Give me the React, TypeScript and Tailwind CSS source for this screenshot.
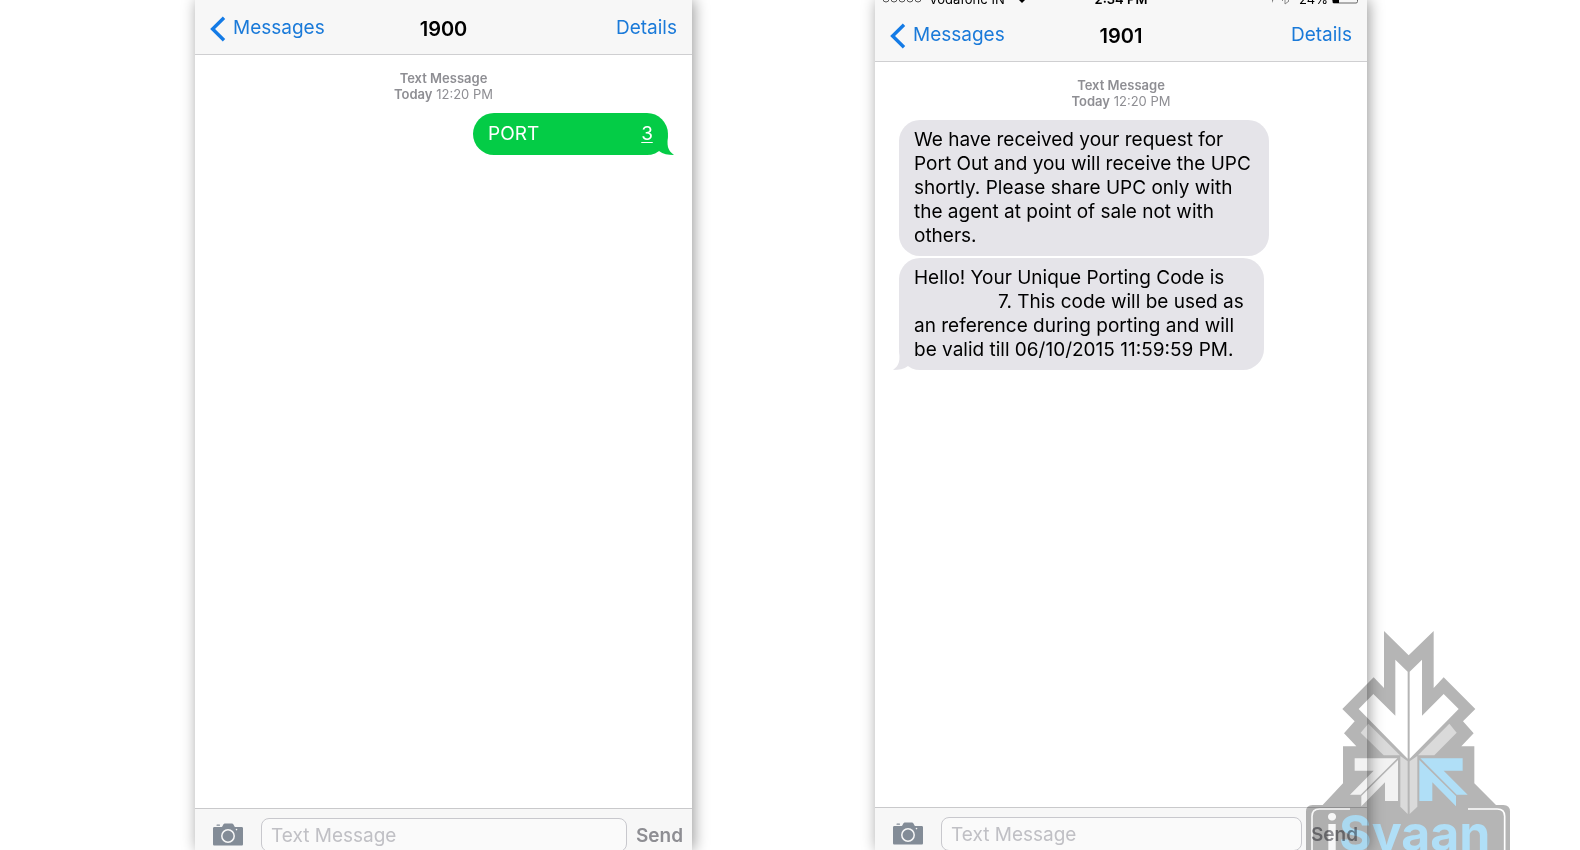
import type { ReactNode } from "react";

// Two SMS conversations side by side, with the site logo stamped over the corner.

function BackChevron() {
  return (
    <svg width="16" height="26" viewBox="0 0 16 26" fill="none" aria-hidden="true">
      <path d="M14 1.8 2.6 13 14 24.2" stroke="#147be6" strokeWidth="3.4" />
    </svg>
  );
}

function CameraIcon() {
  return (
    <svg width="30" height="24" viewBox="0 0 30 24" aria-hidden="true">
      <path
        d="M1.500 4h6.500c1 0 1.300-.6 1.800-1.600C10.500 1 11 .4 12.400.4h6c1.400 0 1.900.6 2.600 2 .5 1 .8 1.600 1.800 1.600h5.700c1 0 1.500.5 1.500 1.500v15.600c0 1-.5 1.500-1.500 1.500h-27C.5 22.600 0 22.100 0 21.100V5.500C0 4.500.5 4 1.500 4Z"
        fill="#838c97"
      />
      <rect x="3.500" y="1.600" width="3.500" height="1.200" rx=".5" fill="#838c97" />
      <circle cx="15" cy="13" r="6.200" fill="none" stroke="#f7f7f7" strokeWidth="1.500" />
      <circle cx="23.500" cy="6.600" r=".8" fill="#f7f7f7" />
    </svg>
  );
}

function StatusBar() {
  return (
    <div className="grid h-[7px] grid-cols-[1fr_auto_1fr] content-end overflow-hidden px-2 text-[13px] leading-4 text-black">
      <div className="flex items-end gap-1.5">
        <svg width="40" height="16" viewBox="0 0 40 16" aria-hidden="true">
          {[3, 11, 19, 27, 35].map((cx) => (
            <circle key={cx} cx={cx} cy="8" r="3" fill="none" stroke="#555" />
          ))}
        </svg>
        <span>Vodafone IN</span>
        <svg className="ml-1" width="14" height="16" viewBox="0 0 14 16" aria-hidden="true">
          <path d="M0 5Q7-1 14 5L7 12Z" />
        </svg>
      </div>
      <span className="font-semibold">2:34 PM</span>
      <div className="flex items-end justify-end gap-1">
        <svg width="10" height="16" viewBox="0 0 10 16" aria-hidden="true">
          <path d="M10 1 5 12V6H0Z" fill="#777" />
        </svg>
        <svg className="mr-1" width="10" height="16" viewBox="0 0 10 16" fill="none" aria-hidden="true">
          <path d="m1 3 7 7-4 3V-1l4 4-7 7" stroke="#888" />
        </svg>
        <span>24%</span>
        <svg width="27" height="16" viewBox="0 0 27 16" aria-hidden="true">
          <rect x=".5" y="1.500" width="25" height="10.500" rx="1.500" fill="none" stroke="#666" />
          <path d="M1 2h6v10H1Z" />
        </svg>
      </div>
    </div>
  );
}

interface PhoneProps {
  title: string;
  showStatus?: boolean;
  footerClass: string;
  children: ReactNode;
}

function Phone({ title, showStatus, footerClass, children }: PhoneProps) {
  const inputId = `message-${title}`;
  return (
    <section className="flex h-full min-w-0 flex-col bg-white shadow-[2px_0_14px_rgba(0,0,0,0.4)]">
      <header className="border-b border-[#cfcfd1] bg-[#f7f7f7]">
        {showStatus && <StatusBar />}
        <div className="grid h-[54px] grid-cols-[1fr_auto_1fr] items-center px-[15px] pt-[3px] text-[19px]">
          <a href="#messages" className="flex items-center gap-[7px] text-[#1a7ad9]">
            <BackChevron />
            Messages
          </a>
          <h1 className="text-[20px] font-semibold text-black">{title}</h1>
          <button type="button" className="justify-self-end text-[#1a7ad9]">
            Details
          </button>
        </div>
      </header>

      <main className="flex min-h-0 flex-1 flex-col px-6 pt-[15px]">
        <p className="mb-[11px] text-center text-[13px] leading-4 text-[#8e8e93]">
          <span className="font-semibold">Text Message</span>
          <br />
          <span className="font-semibold">Today</span> 12:20 PM
        </p>
        {children}
      </main>

      <footer
        className={`flex shrink-0 items-start overflow-hidden border-t border-[#c9c9cb] bg-[#f7f7f7] pr-[9px] pl-[18px] pt-[9px] ${footerClass}`}
      >
        <button type="button" aria-label="Camera" className="mt-[5px] shrink-0">
          <CameraIcon />
        </button>
        <label htmlFor={inputId} className="sr-only">
          Text Message
        </label>
        <input
          id={inputId}
          type="text"
          placeholder="Text Message"
          className="ml-[18px] h-[34px] min-w-0 flex-1 rounded-lg border border-[#c8c8cd] bg-[#fafafa] px-[9px] text-[19px] placeholder:text-[#c0c0c5]"
        />
        <button type="button" className="ml-[9px] h-9 text-[19px] font-semibold text-[#8e8e93]">
          Send
        </button>
      </footer>
    </section>
  );
}

function SiteLogo() {
  return (
    <svg
      className="pointer-events-none absolute right-[50px] bottom-0 mix-blend-multiply"
      width="240"
      height="230"
      viewBox="0 0 720 690"
      role="img"
      aria-label="iSyaan"
    >
      <path
        d="M282 33 356 106 431 33V204L461 172 556 267 519 304 551 340 514 379H553V490L618 555H640Q660 555 660 575V690H48V575Q48 555 68 555H98L159 490V379H199L162 340 194 304 157 267 251 172 282 204Z"
        fill="#b5b5b5"
      />
      <path d="M316 119 353 155V416L206 267 250 222 316 287Z" fill="#fff" />
      <path d="M396 119 359 155V416L506 267 461 222 396 287Z" fill="#fff" />
      <path d="M235 311 330 406H281L212 338Z" fill="#dadada" />
      <path d="M478 311 384 406H433L500 338Z" fill="#dadada" />
      <path d="M331 408 353 424V582L331 560Z" fill="#dadada" />
      <path d="M382 408 359 424V582L382 560Z" fill="#dadada" />
      <path d="M194 415H322L212 524H180L251 452H194Z" fill="#f2f2f2" />
      <path d="M324 420V543H285V487L214 559V528Z" fill="#f2f2f2" />
      <path d="M391 415H518V452H461L533 524H500Z" fill="#b0dff7" />
      <path d="M388 420V543H427V487L498 559V528Z" fill="#b0dff7" />
      <path d="M180 567H88Q66 567 66 589V690" fill="none" stroke="#fff" strokeWidth="5" />
      <path d="M534 567H622Q644 567 644 589V690" fill="none" stroke="#fff" strokeWidth="5" />
      <text x="106" y="694" className="font-[Inter,sans-serif] text-[150px] font-bold" fill="#b0dff7">
        <tspan fill="#fff">i</tspan>Syaan
      </text>
    </svg>
  );
}

export default function App() {
  return (
    <div className="relative isolate grid h-screen grid-cols-[195fr_497fr_183fr_492fr_213fr] grid-rows-[100%] overflow-hidden bg-white font-[Inter,'Liberation_Sans',sans-serif]">
      <div className="col-start-2 min-w-0">
        <Phone title="1900" footerClass="h-[42px]">
          <div className="relative flex w-[195px] justify-between self-end rounded-[21px] bg-[#04cc46] px-[15px] py-[9px] text-[19px] leading-6 text-white">
            <span>PORT</span>
            <a href="#number" className="underline underline-offset-2">
              3
            </a>
            <svg
              className="absolute -right-[6px] bottom-0"
              width="22"
              height="20"
              viewBox="0 0 22 20"
              aria-hidden="true"
            >
              <path d="M16 0C15 10 15 15 22 20 16 20 11 19 7 16L0 8Z" fill="#04cc46" />
            </svg>
          </div>
        </Phone>
      </div>

      <div className="col-start-4 min-w-0">
        <Phone title="1901" showStatus footerClass="h-[43px]">
          <div className="mb-[2px] self-start rounded-[21px] bg-[#e5e4e9] py-2 pr-[18px] pl-[15px] text-[19px] leading-6 text-black">
            We have received your request for
            <br />
            Port Out and you will receive the UPC
            <br />
            shortly. Please share UPC only with
            <br />
            the agent at point of sale not with
            <br />
            others.
          </div>
          <div className="relative self-start rounded-[21px] bg-[#e5e4e9] py-2 pr-[20px] pl-[15px] text-[19px] leading-6 text-black">
            Hello! Your Unique Porting Code is
            <br />
            <span className="inline-block w-[84px]" />
            7. This code will be used as
            <br />
            an reference during porting and will
            <br />
            be valid till 06/10/2015 11:59:59 PM.
            <svg
              className="absolute bottom-0 -left-[6px]"
              width="22"
              height="20"
              viewBox="0 0 22 20"
              aria-hidden="true"
            >
              <path d="M6 0C7 10 7 15 0 20 6 20 11 19 15 16L22 8Z" fill="#e5e4e9" />
            </svg>
          </div>
        </Phone>
      </div>

      <SiteLogo />
    </div>
  );
}
